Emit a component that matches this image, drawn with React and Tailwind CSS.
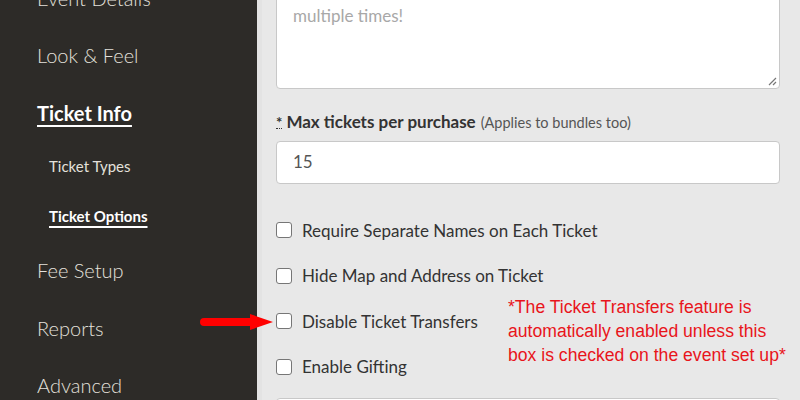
import React from "react";

const navItems = [
    {label: "Event Details", top: true},
    {label: "Look & Feel", top: true},
    {label: "Ticket Info", top: true, active: true},
    {label: "Ticket Types"},
    {label: "Ticket Options", active: true},
    {label: "Fee Setup", top: true},
    {label: "Reports", top: true},
    {label: "Advanced", top: true},
];

const options = [
    "Require Separate Names on Each Ticket",
    "Hide Map and Address on Ticket",
    "Disable Ticket Transfers",
    "Enable Gifting",
];

function Sidebar() {
    return (
        <div className="w-[257px] shrink-0 bg-[#2d2b28] text-[#e4e1dc]">
            <ul className="-mt-[31px] pl-[37px]">
                {navItems.map(item => (
                    <li key={item.label}
                        className={item.top ? "h-[57.5px] flex items-center text-[20px] font-light" : "h-[50px] flex items-center pl-[12px] text-[15px]"}>
                        <span className={item.active ? "font-bold underline underline-offset-[4px] decoration-[2px] text-white" : ""}>
                            {item.label}
                        </span>
                    </li>
                ))}
            </ul>
        </div>
    );
}

function Checkbox() {
    return <span className="w-[16px] h-[16px] rounded-[3px] border border-[#767676] bg-white shrink-0"/>;
}

export default function App() {
    return (
        <div className="w-[800px] h-[400px] overflow-hidden flex font-['Lato',sans-serif]">
            <Sidebar/>
            <div className="relative flex-1 bg-[#e8e8e8] border-l-[5px] border-[#e3e3e3] pl-[14px] pr-[20px]">
                <div className="relative -mt-[40px] h-[129px] bg-white border border-[#c8c8c8] rounded-[4px] px-[16px] pt-[43px] text-[17px] leading-[24px] text-[#a8a8a8]">
                    <div>multiple times!</div>
                    <svg className="absolute right-[2px] bottom-[2px]" width="10" height="10" viewBox="0 0 10 10">
                        <path d="M9 2 L2 9 M9 6 L6 9" stroke="#777" strokeWidth="1.2"/>
                    </svg>
                </div>

                <div className="mt-[20px] flex items-baseline text-[#333]">
                    <abbr className="text-[15px] font-bold no-underline border-b border-dotted border-[#333] leading-[12px] mr-[4px]">*</abbr>
                    <span className="text-[17px] font-bold">Max tickets per purchase</span>
                    <span className="ml-[5px] text-[14.5px] text-[#555]">(Applies to bundles too)</span>
                </div>

                <div className="mt-[6px] h-[43px] bg-white border border-[#c8c8c8] rounded-[4px] flex items-center px-[16px] text-[17px] text-[#555]">
                    15
                </div>

                <div className="mt-[24px] flex flex-col">
                    {options.map(opt => (
                        <label key={opt} className="h-[45.5px] flex items-center gap-[10px] text-[17px] text-[#333]">
                            <Checkbox/>
                            <span>{opt}</span>
                        </label>
                    ))}
                </div>

                <div className="mt-[8px] h-[40px] bg-white border border-[#c8c8c8] rounded-[4px]"/>

                <div className="absolute left-[246px] top-[295px] text-[17.6px] leading-[24px] text-[#e8151b] font-['Liberation_Sans',Arial,sans-serif]">
                    <div>*The Ticket Transfers feature is</div>
                    <div>automatically enabled unless this</div>
                    <div>box is checked on the event set up*</div>
                </div>
            </div>

            <svg className="absolute left-[198px] top-[312px]" width="76" height="20" viewBox="0 0 76 20">
                <path d="M6 10 H56" stroke="#f00" strokeWidth="8" strokeLinecap="round"/>
                <path d="M52 2 L75 10 L52 18 Z" fill="#f00"/>
            </svg>
        </div>
    );
}
